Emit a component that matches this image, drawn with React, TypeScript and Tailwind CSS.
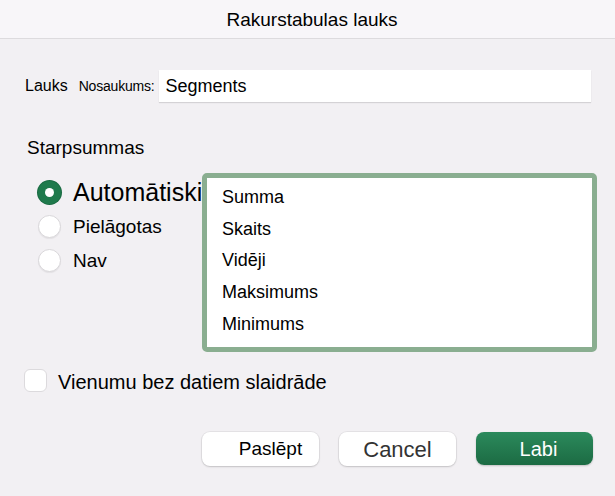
import { useState } from 'react';

const SUBTOTALS = ['Summa', 'Skaits', 'Vidēji', 'Maksimums', 'Minimums'];

const RADIOS = [
  { id: 'auto', label: 'Automātiski', text: 'text-[25px]' },
  { id: 'custom', label: 'Pielāgotas', text: 'text-[19px]' },
  { id: 'none', label: 'Nav', text: 'text-[19px]' },
];

function Radio({ checked }: { checked: boolean }) {
  return checked ? (
    <span className="flex h-[23px] w-[23px] shrink-0 items-center justify-center rounded-full bg-[#1f7a4c] shadow-[0_0_0_1px_#1a6a42]">
      <span className="h-[9px] w-[9px] rounded-full bg-white" />
    </span>
  ) : (
    <span className="h-[23px] w-[23px] shrink-0 rounded-full border border-[#d9d7da] bg-white shadow-[0_1px_1px_rgba(0,0,0,0.06)]" />
  );
}

export default function App() {
  const [mode, setMode] = useState('auto');
  const [name, setName] = useState('Segments');
  const [showEmpty, setShowEmpty] = useState(false);

  return (
    <div className="h-[496px] w-[615px] overflow-hidden bg-[#f2f0f3] font-['Liberation_Sans',Arial,sans-serif] text-black">
      {/* title bar */}
      <header className="flex h-[39px] items-center justify-center border-b border-[#dddbde] bg-[#f8f6f9] pl-[9px]">
        <h1 className="text-[19px] leading-none">Rakurstabulas lauks</h1>
      </header>

      {/* field name */}
      <div className="mt-[31px] flex h-[32px] items-center pl-[25px]">
        <span className="text-[16px]">Lauks</span>
        <span className="ml-[11px] text-[14px] tracking-[-0.2px]">Nosaukums:</span>
        <input
          value={name}
          onChange={(e) => setName(e.target.value)}
          className="ml-[4px] h-[32px] w-[432px] bg-white pl-[7px] text-[18px] shadow-[0_1px_1px_rgba(0,0,0,0.12)] outline-none"
        />
      </div>

      <p className="mt-[35px] pl-[27px] text-[19px] leading-[22px]">Starpsummas</p>

      <div className="mt-[14px] flex items-start">
        <div className="w-[202px] shrink-0 pl-[38px] pt-[2px]">
          {RADIOS.map((r) => (
            <button
              key={r.id}
              onClick={() => setMode(r.id)}
              className="flex h-[34px] items-center gap-[12px] whitespace-nowrap"
            >
              <Radio checked={mode === r.id} />
              <span className={`${r.text} leading-none`}>{r.label}</span>
            </button>
          ))}
        </div>
        <ul className="relative z-10 h-[179px] w-[395px] rounded-[5px] border-[5px] border-[#8aae90] bg-white pl-[15px] pt-[4px] text-[18px] leading-[31.7px]">
          {SUBTOTALS.map((s) => (
            <li key={s}>{s}</li>
          ))}
        </ul>
      </div>

      {/* empty items */}
      <label className="mt-[16px] flex items-center gap-[11px] pl-[24px]">
        <input
          type="checkbox"
          checked={showEmpty}
          onChange={(e) => setShowEmpty(e.target.checked)}
          className="h-[23px] w-[23px] appearance-none rounded-[6px] border border-[#dcdadd] bg-white"
        />
        <span className="pt-[4px] text-[20px] leading-none">Vienumu bez datiem slaidrāde</span>
      </label>

      {/* actions */}
      <div className="mt-[40px] flex justify-end gap-[20px] pr-[22px]">
        <button className="h-[34px] w-[117px] rounded-[8px] bg-white pl-[20px] text-[19px] shadow-[0_0_0_1px_rgba(0,0,0,0.05),0_1px_2px_rgba(0,0,0,0.15)]">
          Paslēpt
        </button>
        <button className="h-[34px] w-[117px] rounded-[8px] bg-white text-[22px] text-[#333] shadow-[0_0_0_1px_rgba(0,0,0,0.05),0_1px_2px_rgba(0,0,0,0.15)]">
          Cancel
        </button>
        <button className="h-[33px] w-[117px] rounded-[8px] bg-gradient-to-b from-[#2b8a5c] to-[#1c6b43] pl-[8px] text-[20px] text-white shadow-[0_1px_2px_rgba(0,0,0,0.2)]">
          Labi
        </button>
      </div>
    </div>
  );
}
